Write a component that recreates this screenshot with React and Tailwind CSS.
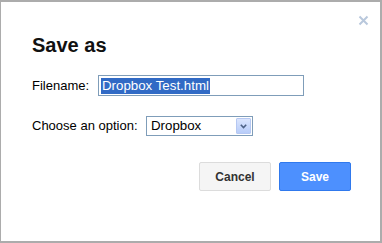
export default function App() {
  return (
    <div
      className="relative h-[243px] w-[382px] border-b-2 border-l border-r-2 border-t-2 border-[#acacac] bg-white pl-[31px] pr-[29px] pt-[31px]"
      style={{ fontFamily: '"Liberation Sans", Arial, sans-serif' }}
    >
      <button type="button" className="absolute left-[357px] top-[13px] flex h-[11px] w-[11px] items-center justify-center">
        <svg width="11" height="11" viewBox="0 0 11 11">
          <path d="M1.5 1.5 L9.5 9.5 M9.5 1.5 L1.5 9.5" stroke="#b9c8dc" strokeWidth="2" />
        </svg>
      </button>

      <h1 className="text-[20px] font-bold leading-[24px] text-[#111]">Save as</h1>

      <div className="mt-[18px] flex h-[21px] items-center">
        <label className="w-[66px] text-[13px] leading-[16px] text-black">Filename:</label>
        <div className="flex h-[21px] w-[206px] items-center border border-[#7f9db9] bg-white pl-[2px]">
          <span className="bg-[#316ac5] px-[1px] text-[13.3px] leading-[16px] text-white">
            Dropbox Test.html
          </span>
        </div>
      </div>

      <div className="mt-[20px] flex h-[20px] items-center">
        <label className="w-[114px] text-[13px] leading-[16px] text-black">Choose an option:</label>
        <div className="flex h-[20px] w-[107px] items-center border border-[#7f9db9] bg-white pl-[4px] pr-[1px]">
          <span className="flex-1 text-[13.3px] leading-[16px] text-black">Dropbox</span>
          <div className="flex h-[16px] w-[15px] items-center justify-center rounded-[1px] border border-[#b6c8f2] bg-gradient-to-b from-[#dbe5fd] to-[#b7ccf9]">
            <svg width="7" height="5" viewBox="0 0 7 5">
              <path d="M0.8 0.8 L3.5 3.5 L6.2 0.8" fill="none" stroke="#4d6185" strokeWidth="1.6" />
            </svg>
          </div>
        </div>
      </div>

      <div className="mt-[26px] flex justify-end gap-[8px]">
        <button
          type="button"
          className="h-[29px] w-[72px] rounded-[2px] border border-[#dcdcdc] bg-[#f5f5f5] text-[12px] font-bold text-[#333]"
        >
          Cancel
        </button>
        <button
          type="button"
          className="h-[29px] w-[72px] rounded-[2px] border border-[#3079ed] bg-[#4d90fe] text-[12px] font-bold text-white"
        >
          Save
        </button>
      </div>
    </div>
  );
}
